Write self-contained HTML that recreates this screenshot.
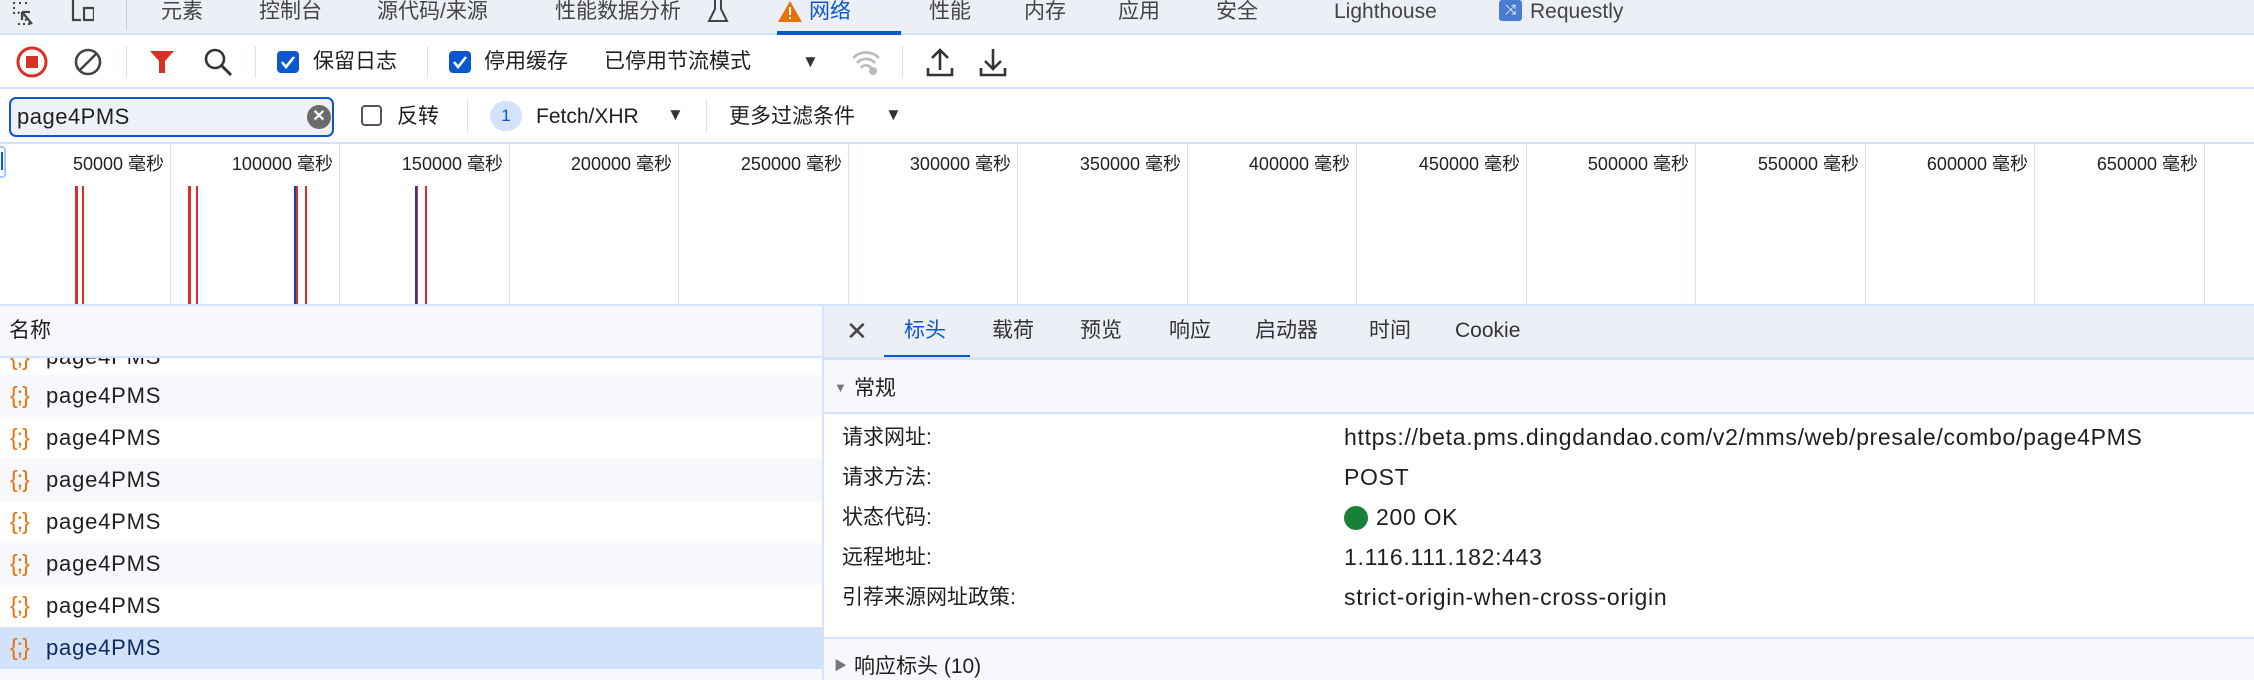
<!DOCTYPE html>
<html><head><meta charset="utf-8"><style>
*{margin:0;padding:0;box-sizing:border-box}
body{width:2254px;height:680px;overflow:hidden;background:#fff;font-family:"Liberation Sans","Noto Sans CJK SC",sans-serif;color:#1f1f1f;position:relative;font-size:21px}
.a{position:absolute;white-space:nowrap}
.vl{position:absolute;width:1px;background:#d3e3fd}
.hl{position:absolute;height:2px;background:#d3e3fd}
.t{line-height:1}
.v{font-size:23px;letter-spacing:0.7px}
</style></head><body>
<!-- top tab bar -->
<div class="a" style="left:0;top:0;width:2254px;height:33px;background:#eceff6"></div>
<div class="hl" style="left:0;top:33px;width:2254px"></div>
<svg class="a" style="left:4px;top:0" width="90" height="30"><path d="M10 2v14M16 2v2M22 2v2M14 24l14 -0M14 12l12 12" stroke="#444" stroke-width="2" fill="none" stroke-dasharray="2 3"/><path d="M18 12l10 12M18 12v8M18 12h8" stroke="#444" stroke-width="2.2" fill="none"/><path d="M69 0v20h8M80 8h10v12h-10z" stroke="#444" stroke-width="2.2" fill="none"/></svg>
<div class="vl" style="left:126px;top:0;height:30px;background:#c8cdd8"></div>
<div class="a t" style="left:161px;top:1px;color:#444">元素</div>
<div class="a t" style="left:259px;top:1px;color:#444">控制台</div>
<div class="a t" style="left:377px;top:1px;color:#444">源代码/来源</div>
<div class="a t" style="left:555px;top:1px;color:#444">性能数据分析</div>
<svg class="a" style="left:707px;top:0" width="24" height="24"><path d="M8 0v9l-6 12h18l-6-12v-9" stroke="#444" stroke-width="2" fill="none"/></svg>
<svg class="a" style="left:777px;top:0" width="26" height="24"><path d="M13 1L25 22H1z" fill="#e8710a"/><rect x="12" y="7" width="2" height="8" fill="#fff"/><rect x="12" y="17" width="2" height="2" fill="#fff"/></svg>
<div class="a t" style="left:809px;top:1px;color:#0b57d0">网络</div>
<div class="a" style="left:777px;top:31px;width:124px;height:4px;background:#0b57d0"></div>
<div class="a t" style="left:929px;top:1px;color:#444">性能</div>
<div class="a t" style="left:1024px;top:1px;color:#444">内存</div>
<div class="a t" style="left:1118px;top:1px;color:#444">应用</div>
<div class="a t" style="left:1216px;top:1px;color:#444">安全</div>
<div class="a t" style="left:1334px;top:1px;color:#444">Lighthouse</div>
<div class="a" style="left:1499px;top:0;width:23px;height:21px;background:#4a7bd0;border-radius:3px;color:#fff;font-size:14px;text-align:center;line-height:19px">⤨</div>
<div class="a t" style="left:1530px;top:1px;color:#444">Requestly</div>

<!-- toolbar -->
<svg class="a" style="left:14px;top:44px" width="36" height="36"><circle cx="18" cy="18" r="14" stroke="#d93025" stroke-width="3" fill="none"/><rect x="12" y="12" width="12" height="12" fill="#d93025"/></svg>
<svg class="a" style="left:72px;top:46px" width="32" height="32"><circle cx="16" cy="16" r="12" stroke="#444" stroke-width="2.6" fill="none"/><path d="M8 24L24 8" stroke="#444" stroke-width="2.6"/></svg>
<div class="vl" style="left:126px;top:46px;height:32px"></div>
<svg class="a" style="left:148px;top:48px" width="28" height="28"><path d="M2 3h24l-9 10v12h-6v-12z" fill="#d93025"/></svg>
<svg class="a" style="left:202px;top:46px" width="32" height="32"><circle cx="13" cy="13" r="9" stroke="#333" stroke-width="2.6" fill="none"/><path d="M19 19l10 10" stroke="#333" stroke-width="3"/></svg>
<div class="vl" style="left:255px;top:46px;height:32px"></div>
<div class="a" style="left:277px;top:51px;width:22px;height:22px;background:#0b57d0;border-radius:4px"><svg width="22" height="22"><path d="M5 11l4 5 8-10" stroke="#fff" stroke-width="2.6" fill="none"/></svg></div>
<div class="a t" style="left:313px;top:51px">保留日志</div>
<div class="vl" style="left:427px;top:46px;height:32px"></div>
<div class="a" style="left:449px;top:51px;width:22px;height:22px;background:#0b57d0;border-radius:4px"><svg width="22" height="22"><path d="M5 11l4 5 8-10" stroke="#fff" stroke-width="2.6" fill="none"/></svg></div>
<div class="a t" style="left:484px;top:51px">停用缓存</div>
<div class="a t" style="left:604px;top:51px">已停用节流模式</div>
<div class="a t" style="left:802px;top:53px;font-size:17px;color:#333">▼</div>
<svg class="a" style="left:850px;top:46px" width="32" height="32"><path d="M3 12a18 18 0 0 1 26 0M7 17a12 12 0 0 1 18 0M11 22a6 6 0 0 1 10 0" stroke="#bbb" stroke-width="2.6" fill="none"/><circle cx="23" cy="25" r="4" fill="#bbb"/></svg>
<div class="vl" style="left:902px;top:46px;height:32px"></div>
<svg class="a" style="left:925px;top:46px" width="30" height="32"><path d="M15 24V4M7 12l8-8 8 8M3 22v7h24v-7" stroke="#333" stroke-width="2.6" fill="none"/></svg>
<svg class="a" style="left:978px;top:46px" width="30" height="32"><path d="M15 3v20M7 15l8 8 8-8M3 22v7h24v-7" stroke="#333" stroke-width="2.6" fill="none"/></svg>
<div class="hl" style="left:0;top:87px;width:2254px"></div>

<!-- filter row -->
<div class="a" style="left:9px;top:97px;width:325px;height:40px;border:2px solid #0b57d0;border-radius:7px;background:#eef1f8"></div>
<div class="a t" style="left:17px;top:106px;font-size:22px;letter-spacing:0.5px">page4PMS</div>
<div class="a" style="left:307px;top:105px;width:24px;height:24px;border-radius:50%;background:#6b6b6b;color:#fff;font-size:16px;text-align:center;line-height:24px;font-weight:bold">✕</div>
<div class="a" style="left:361px;top:105px;width:21px;height:21px;border:2px solid #555;border-radius:4px"></div>
<div class="a t" style="left:397px;top:106px">反转</div>
<div class="vl" style="left:467px;top:100px;height:32px"></div>
<div class="a" style="left:490px;top:101px;width:32px;height:30px;border-radius:15px;background:#d3e3fd;color:#0b57d0;font-size:17px;text-align:center;line-height:30px">1</div>
<div class="a t" style="left:536px;top:106px">Fetch/XHR</div>
<div class="a t" style="left:667px;top:106px;font-size:17px;color:#333">▼</div>
<div class="vl" style="left:706px;top:100px;height:32px"></div>
<div class="a t" style="left:729px;top:106px">更多过滤条件</div>
<div class="a t" style="left:885px;top:106px;font-size:17px;color:#333">▼</div>
<div class="hl" style="left:0;top:142px;width:2254px"></div>

<!-- timeline -->
<div class="a" style="left:0;top:146px;width:6px;height:32px;border:2px solid #a8c7fa;border-left:none;border-radius:0 4px 4px 0"></div>
<div class="a" style="left:1px;top:152px;width:2px;height:18px;background:#0b57d0"></div>
<div id="tl"></div>
<div class="a" style="left:75px;top:186px;width:3px;height:120px;background:#d93025"></div>
<div class="a" style="left:82px;top:186px;width:2px;height:120px;background:#d93025"></div>
<div class="a" style="left:188px;top:186px;width:3px;height:120px;background:#d93025"></div>
<div class="a" style="left:196px;top:186px;width:2px;height:120px;background:#d93025"></div>
<div class="a" style="left:294px;top:186px;width:2px;height:120px;background:#1a3fa8"></div>
<div class="a" style="left:296px;top:186px;width:2px;height:120px;background:#d93025"></div>
<div class="a" style="left:305px;top:186px;width:2px;height:120px;background:#d93025"></div>
<div class="a" style="left:415px;top:186px;width:2px;height:120px;background:#1a3fa8"></div>
<div class="a" style="left:417px;top:186px;width:1px;height:120px;background:#d93025"></div>
<div class="a" style="left:425px;top:186px;width:2px;height:120px;background:#d93025"></div>
<script>
var h='';var labels=['50000','100000','150000','200000','250000','300000','350000','400000','450000','500000','550000','600000','650000'];
for(var k=1;k<=13;k++){var x=Math.round(169.5*k);h+='<div class="vl" style="left:'+x+'px;top:144px;height:162px"></div>';
h+='<div class="a t" style="left:'+(x-169)+'px;width:163px;text-align:right;top:155px;font-size:18px;color:#222">'+labels[k-1]+' 毫秒</div>';}
document.getElementById('tl').innerHTML=h;
</script>
<div class="hl" style="left:0;top:304px;width:2254px"></div>

<!-- left list -->
<div class="a" style="left:0;top:306px;width:822px;height:51px;background:#f6f8fc"></div>
<div class="a t" style="left:9px;top:320px">名称</div>
<div class="hl" style="left:0;top:356px;width:822px"></div>
<div id="rows"></div>
<script>
var r='';var bg=['#f6f8fc','#fff','#f6f8fc','#fff','#f6f8fc','#fff','#d3e2fb'];
r+='<div class="a" style="left:0;top:358px;width:822px;height:17px;overflow:hidden"><div class="a t" style="left:10px;top:-12px;color:#e8710a;font-size:23px;letter-spacing:-1px">{;}</div><div class="a t" style="left:46px;top:-12px;font-size:22px;letter-spacing:0.8px">page4PMS</div></div>';
for(var i=0;i<7;i++){var y=375+42*i;r+='<div class="a" style="left:0;top:'+y+'px;width:822px;height:42px;background:'+bg[i]+'"></div>';
r+='<div class="a t" style="left:10px;top:'+(y+9)+'px;color:#e8710a;font-size:23px;letter-spacing:-1px">{;}</div>';
r+='<div class="a t" style="left:46px;top:'+(y+10)+'px;font-size:22px;letter-spacing:0.8px;color:'+(i==6?'#0c2a5e':'#1f1f1f')+'">page4PMS</div>';}
r+='<div class="a" style="left:0;top:669px;width:822px;height:11px;background:#f6f8fc"></div>';
document.getElementById('rows').innerHTML=r;
</script>
<div class="vl" style="left:822px;top:306px;height:374px;width:2px"></div>

<!-- right pane -->
<div class="a" style="left:824px;top:306px;width:1430px;height:51px;background:#eceff6"></div>
<div class="a t" style="left:846px;top:318px;font-size:26px;color:#444">✕</div>
<div class="a t" style="left:904px;top:320px;color:#0b57d0">标头</div>
<div class="a" style="left:884px;top:355px;width:86px;height:3px;background:#0b57d0"></div>
<div class="a t" style="left:992px;top:320px;color:#333">载荷</div>
<div class="a t" style="left:1080px;top:320px;color:#333">预览</div>
<div class="a t" style="left:1169px;top:320px;color:#333">响应</div>
<div class="a t" style="left:1255px;top:320px;color:#333">启动器</div>
<div class="a t" style="left:1369px;top:320px;color:#333">时间</div>
<div class="a t" style="left:1455px;top:320px;color:#333">Cookie</div>
<div class="hl" style="left:824px;top:357px;width:1430px;height:3px"></div>
<div class="a" style="left:824px;top:360px;width:1430px;height:52px;background:#f6f8fc"></div>
<div class="a t" style="left:834px;top:381px;font-size:13px;color:#777">▼</div>
<div class="a t" style="left:854px;top:378px">常规</div>
<div class="hl" style="left:824px;top:412px;width:1430px"></div>
<div class="a t" style="left:842px;top:427px">请求网址:</div>
<div class="a t v" style="left:1344px;top:426px">https://beta.pms.dingdandao.com/v2/mms/web/presale/combo/page4PMS</div>
<div class="a t" style="left:842px;top:467px">请求方法:</div>
<div class="a t v" style="left:1344px;top:466px">POST</div>
<div class="a t" style="left:842px;top:507px">状态代码:</div>
<div class="a" style="left:1344px;top:506px;width:24px;height:24px;border-radius:50%;background:#188038"></div>
<div class="a t v" style="left:1376px;top:506px">200 OK</div>
<div class="a t" style="left:842px;top:547px">远程地址:</div>
<div class="a t v" style="left:1344px;top:546px">1.116.111.182:443</div>
<div class="a t" style="left:842px;top:587px">引荐来源网址政策:</div>
<div class="a t v" style="left:1344px;top:586px">strict-origin-when-cross-origin</div>
<div class="hl" style="left:824px;top:637px;width:1430px"></div>
<div class="a" style="left:824px;top:639px;width:1430px;height:41px;background:#f6f8fc"></div>
<div class="a t" style="left:834px;top:659px;font-size:13px;color:#777">▶</div>
<div class="a t" style="left:854px;top:656px">响应标头 (10)</div>
</body></html>
